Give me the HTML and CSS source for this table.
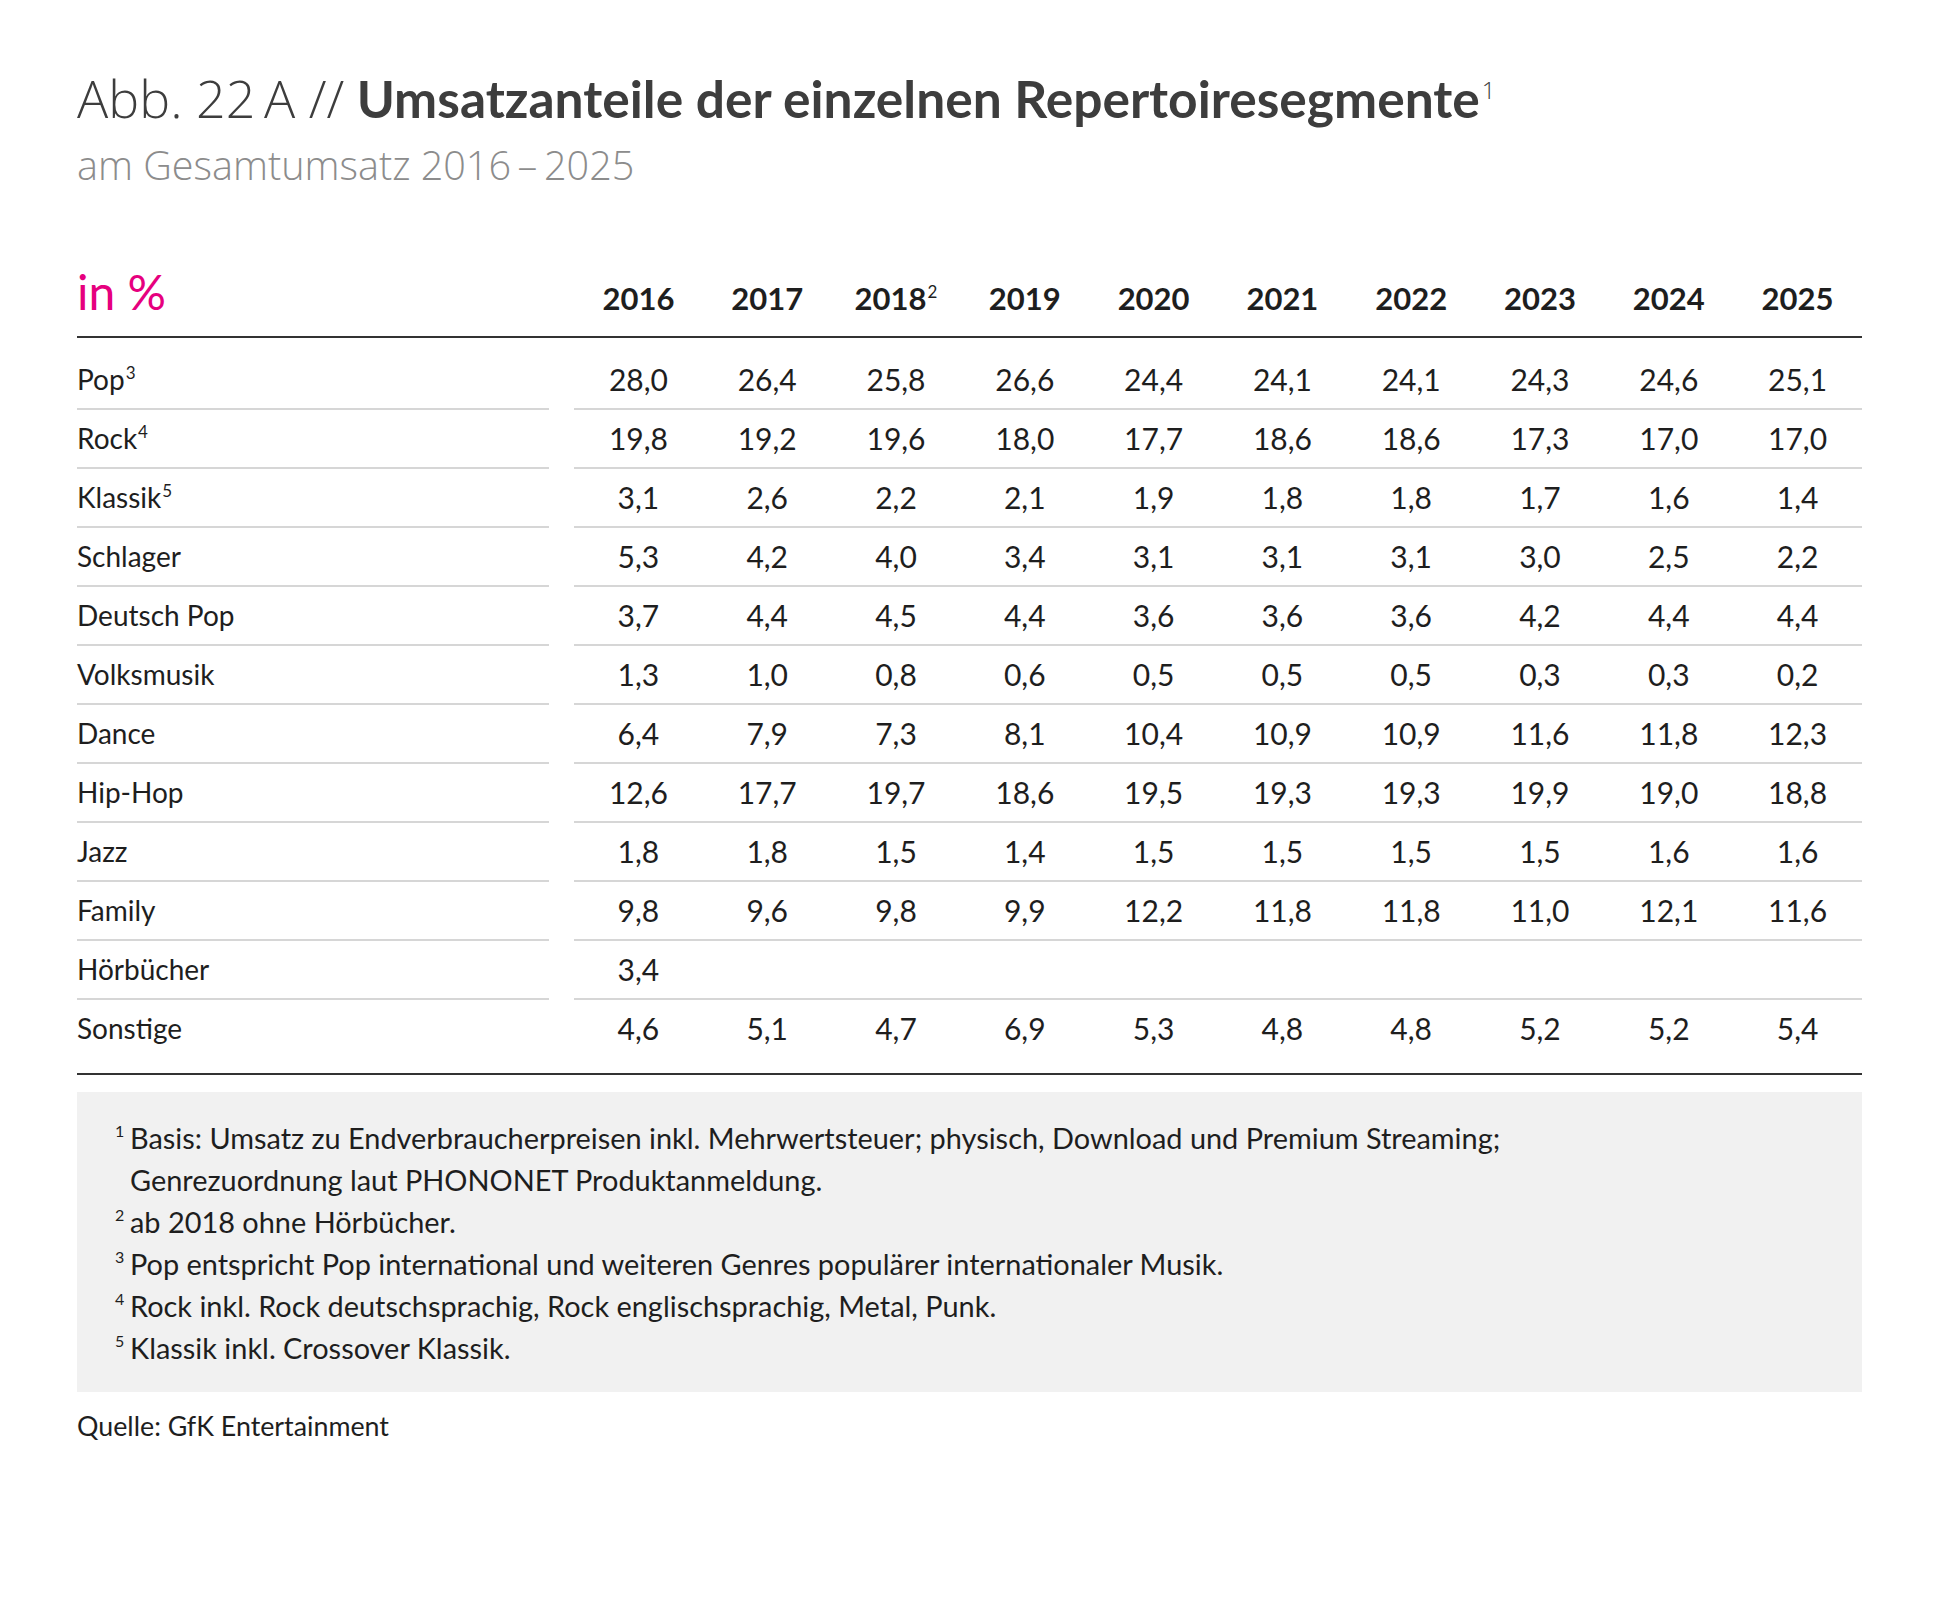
FILE: index.html
```html
<!DOCTYPE html>
<html lang="de">
<head>
<meta charset="utf-8">
<title>Abb. 22 A</title>
<link rel="stylesheet" href="styles.css">
</head>
<body>
<div class="page">
  <header class="head">
    <h1 class="title"><span class="title-pre">Abb. 22&#8201;A //</span> Umsatzanteile der einzelnen Repertoiresegmente<sup class="title-sup">1</sup></h1>
    <p class="subtitle">am Gesamtumsatz 2016&#8201;–&#8201;2025</p>
  </header>

  <section class="table">
    <div class="thead">
      <div class="unit">in %</div>
      <div class="yr">2016</div>
      <div class="yr">2017</div>
      <div class="yr">2018<sup class="yr-sup">2</sup></div>
      <div class="yr">2019</div>
      <div class="yr">2020</div>
      <div class="yr">2021</div>
      <div class="yr">2022</div>
      <div class="yr">2023</div>
      <div class="yr">2024</div>
      <div class="yr">2025</div>
    </div>
    <div class="tbody">
      <div class="row"><div class="label">Pop<sup>3</sup></div><div class="vals"><span>28,0</span><span>26,4</span><span>25,8</span><span>26,6</span><span>24,4</span><span>24,1</span><span>24,1</span><span>24,3</span><span>24,6</span><span>25,1</span></div></div>
      <div class="row"><div class="label">Rock<sup>4</sup></div><div class="vals"><span>19,8</span><span>19,2</span><span>19,6</span><span>18,0</span><span>17,7</span><span>18,6</span><span>18,6</span><span>17,3</span><span>17,0</span><span>17,0</span></div></div>
      <div class="row"><div class="label">Klassik<sup>5</sup></div><div class="vals"><span>3,1</span><span>2,6</span><span>2,2</span><span>2,1</span><span>1,9</span><span>1,8</span><span>1,8</span><span>1,7</span><span>1,6</span><span>1,4</span></div></div>
      <div class="row"><div class="label">Schlager</div><div class="vals"><span>5,3</span><span>4,2</span><span>4,0</span><span>3,4</span><span>3,1</span><span>3,1</span><span>3,1</span><span>3,0</span><span>2,5</span><span>2,2</span></div></div>
      <div class="row"><div class="label">Deutsch Pop</div><div class="vals"><span>3,7</span><span>4,4</span><span>4,5</span><span>4,4</span><span>3,6</span><span>3,6</span><span>3,6</span><span>4,2</span><span>4,4</span><span>4,4</span></div></div>
      <div class="row"><div class="label">Volksmusik</div><div class="vals"><span>1,3</span><span>1,0</span><span>0,8</span><span>0,6</span><span>0,5</span><span>0,5</span><span>0,5</span><span>0,3</span><span>0,3</span><span>0,2</span></div></div>
      <div class="row"><div class="label">Dance</div><div class="vals"><span>6,4</span><span>7,9</span><span>7,3</span><span>8,1</span><span>10,4</span><span>10,9</span><span>10,9</span><span>11,6</span><span>11,8</span><span>12,3</span></div></div>
      <div class="row"><div class="label">Hip-Hop</div><div class="vals"><span>12,6</span><span>17,7</span><span>19,7</span><span>18,6</span><span>19,5</span><span>19,3</span><span>19,3</span><span>19,9</span><span>19,0</span><span>18,8</span></div></div>
      <div class="row"><div class="label">Jazz</div><div class="vals"><span>1,8</span><span>1,8</span><span>1,5</span><span>1,4</span><span>1,5</span><span>1,5</span><span>1,5</span><span>1,5</span><span>1,6</span><span>1,6</span></div></div>
      <div class="row"><div class="label">Family</div><div class="vals"><span>9,8</span><span>9,6</span><span>9,8</span><span>9,9</span><span>12,2</span><span>11,8</span><span>11,8</span><span>11,0</span><span>12,1</span><span>11,6</span></div></div>
      <div class="row"><div class="label">Hörbücher</div><div class="vals"><span>3,4</span><span></span><span></span><span></span><span></span><span></span><span></span><span></span><span></span><span></span></div></div>
      <div class="row"><div class="label">Sonstige</div><div class="vals"><span>4,6</span><span>5,1</span><span>4,7</span><span>6,9</span><span>5,3</span><span>4,8</span><span>4,8</span><span>5,2</span><span>5,2</span><span>5,4</span></div></div>
    </div>
  </section>

  <div class="notes">
    <div class="note"><sup class="note-num">1</sup><span class="note-text">Basis: Umsatz zu Endverbraucherpreisen inkl. Mehrwertsteuer; physisch, Download und Premium Streaming;<br>Genrezuordnung laut PHONONET Produktanmeldung.</span></div>
    <div class="note"><sup class="note-num">2</sup><span class="note-text">ab 2018 ohne Hörbücher.</span></div>
    <div class="note"><sup class="note-num">3</sup><span class="note-text">Pop entspricht Pop international und weiteren Genres populärer internationaler Musik.</span></div>
    <div class="note"><sup class="note-num">4</sup><span class="note-text">Rock inkl. Rock deutschsprachig, Rock englischsprachig, Metal, Punk.</span></div>
    <div class="note"><sup class="note-num">5</sup><span class="note-text">Klassik inkl. Crossover Klassik.</span></div>
  </div>

  <p class="source">Quelle: GfK Entertainment</p>
</div>
</body>
</html>
```

FILE: styles.css
```css
* { box-sizing: border-box; }

html, body {
  margin: 0;
  padding: 0;
  background: #ffffff;
}

body {
  font-family: Lato, "Open Sans", "Liberation Sans", sans-serif;
  color: #1e1e1e;
}

.page {
  width: 1785px;
  margin-left: 77px;
  padding-top: 66px;
}

/* Title */
.title {
  margin: 0;
  font-family: Lato, "Open Sans", sans-serif;
  font-weight: 700;
  font-size: 51.5px;
  line-height: 64px;
  color: #3d3d3d;
  white-space: nowrap;
}

.title-pre {
  font-family: "Open Sans", Lato, sans-serif;
  font-weight: 300;
  font-size: 52px;
}

.title-sup {
  font-family: "Open Sans", Lato, sans-serif;
  font-weight: 300;
  font-size: 24px;
  line-height: 0;
  vertical-align: 19px;
  margin-left: 2px;
}

.subtitle {
  margin: 11px 0 0;
  font-family: "Open Sans", Lato, sans-serif;
  font-weight: 300;
  font-size: 39.6px;
  line-height: 48px;
  color: #8c8c8c;
}

/* Table */
.table {
  margin-top: 80px;
  border-bottom: 2px solid #333333;
}

.thead {
  display: flex;
  align-items: baseline;
  padding-bottom: 21px;
  border-bottom: 2px solid #333333;
}

.unit {
  flex: 0 0 497px;
  padding-right: 25px;
  font-size: 48px;
  line-height: 46px;
  color: #e6007e;
}

.yr {
  flex: 1 1 0;
  text-align: center;
  font-weight: 700;
  font-size: 31px;
  line-height: 30px;
  color: #1e1e1e;
}

.yr-sup {
  font-weight: 400;
  font-size: 17px;
  line-height: 0;
  vertical-align: 12px;
  margin-left: 1px;
}

.tbody {
  padding-top: 13px;
  padding-bottom: 16px;
}

.row {
  display: flex;
}

.label {
  flex: 0 0 472px;
  margin-right: 25px;
  font-size: 28px;
  line-height: 57px;
  border-bottom: 2px solid #d6d6d6;
}

.label sup {
  font-size: 17px;
  line-height: 0;
  vertical-align: 11px;
  margin-left: 1px;
}

.vals {
  flex: 1 1 auto;
  display: flex;
  border-bottom: 2px solid #d6d6d6;
}

.vals span {
  flex: 1 1 0;
  text-align: center;
  font-size: 30px;
  line-height: 57px;
}

.row:last-child .label,
.row:last-child .vals {
  border-bottom: none;
}

/* Notes */
.notes {
  margin-top: 17px;
  background: #f1f1f1;
  padding: 25px 38px 23px;
}

.note {
  display: flex;
  font-size: 28.9px;
  line-height: 42px;
  color: #1e1e1e;
}

.note-num {
  flex: 0 0 15px;
  font-size: 16px;
  line-height: 0;
  position: relative;
  top: 14px;
}

.note-text {
  flex: 1 1 auto;
}

.source {
  margin: 18px 0 0;
  font-size: 26.8px;
  line-height: 32px;
  color: #1e1e1e;
}
```
